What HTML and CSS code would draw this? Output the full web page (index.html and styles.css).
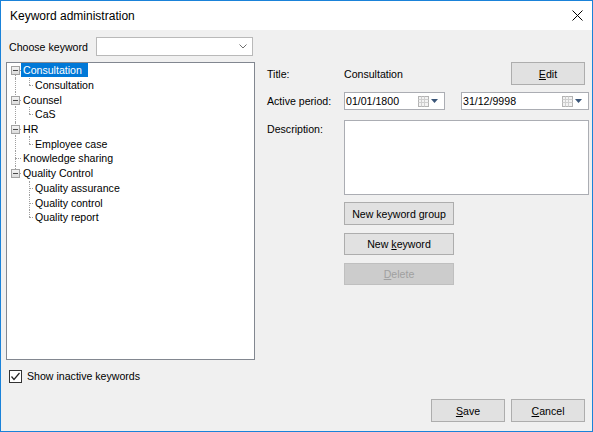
FILE: index.html
```html
<!DOCTYPE html>
<html>
<head>
<meta charset="utf-8">
<title>Keyword administration</title>
<link rel="stylesheet" href="styles.css">
</head>
<body>
<div class="window">
  <div class="titlebar">
    <span class="title">Keyword administration</span>
    <svg class="close" width="11" height="11" viewBox="0 0 11 11"><path d="M0.5 0.5 L10.5 10.5 M10.5 0.5 L0.5 10.5" stroke="#000" stroke-width="1" fill="none"/></svg>
  </div>
  <div class="content">
    <div class="main">
      <div class="left">
        <div class="choose">
          <span class="choose-label">Choose keyword</span>
          <div class="combo">
            <svg class="chev" width="8" height="5" viewBox="0 0 8 5"><path d="M0.5 0.5 L4 4 L7.5 0.5" stroke="#6f6f6f" fill="none" stroke-width="1"/></svg>
          </div>
        </div>
        <div class="tree">
          <div class="row"><span class="c vb h"><span class="box"></span></span><span class="lbl sel">Consultation</span></div>
          <div class="row"><span class="c vf"></span><span class="c c2 vt h"></span><span class="lbl">Consultation</span></div>
          <div class="row"><span class="c vf h"><span class="box"></span></span><span class="lbl">Counsel</span></div>
          <div class="row"><span class="c vf"></span><span class="c c2 vt h"></span><span class="lbl">CaS</span></div>
          <div class="row"><span class="c vf h"><span class="box"></span></span><span class="lbl">HR</span></div>
          <div class="row"><span class="c vf"></span><span class="c c2 vt h"></span><span class="lbl">Employee case</span></div>
          <div class="row"><span class="c vf h"></span><span class="lbl">Knowledge sharing</span></div>
          <div class="row"><span class="c vt h"><span class="box"></span></span><span class="lbl">Quality Control</span></div>
          <div class="row"><span class="c"></span><span class="c c2 vf h"></span><span class="lbl">Quality assurance</span></div>
          <div class="row"><span class="c"></span><span class="c c2 vf h"></span><span class="lbl">Quality control</span></div>
          <div class="row"><span class="c"></span><span class="c c2 vt h"></span><span class="lbl">Quality report</span></div>
        </div>
        <div class="check-row">
          <span class="checkbox">
            <svg width="11" height="11" viewBox="0 0 11 11"><path d="M1.5 5.5 L4 8.5 L9.5 2" stroke="#222" stroke-width="1.2" fill="none"/></svg>
          </span>
          <span class="check-label">Show inactive keywords</span>
        </div>
      </div>
      <div class="right">
        <div class="title-row">
          <span class="label">Title:</span>
          <span class="value">Consultation</span>
          <button class="btn edit"><u>E</u>dit</button>
        </div>
        <div class="period-row">
          <span class="label">Active period:</span>
          <div class="date d1">
            <span class="date-text">01/01/1800</span>
            <span class="cal">
              <svg width="11" height="11" viewBox="0 0 11 11"><rect x="0.5" y="0.5" width="10" height="10" fill="#f3f3f3" stroke="#b3b3b3"/><path d="M0.5 3.5 H10.5 M0.5 6.5 H10.5 M3.5 0.5 V10.5 M6.5 0.5 V10.5" stroke="#cfcfcf"/></svg>
              <svg class="tri" width="7" height="4" viewBox="0 0 7 4"><path d="M0 0 H7 L3.5 4 Z" fill="#3a5578"/></svg>
            </span>
          </div>
          <div class="date d2">
            <span class="date-text">31/12/9998</span>
            <span class="cal">
              <svg width="11" height="11" viewBox="0 0 11 11"><rect x="0.5" y="0.5" width="10" height="10" fill="#f3f3f3" stroke="#b3b3b3"/><path d="M0.5 3.5 H10.5 M0.5 6.5 H10.5 M3.5 0.5 V10.5 M6.5 0.5 V10.5" stroke="#cfcfcf"/></svg>
              <svg class="tri" width="7" height="4" viewBox="0 0 7 4"><path d="M0 0 H7 L3.5 4 Z" fill="#3a5578"/></svg>
            </span>
          </div>
        </div>
        <div class="desc-row">
          <span class="label desc-label">Description:</span>
          <div class="textarea"></div>
        </div>
        <div class="actions">
          <button class="btn act nkg">New keyword group</button>
          <button class="btn act nk">New <u>k</u>eyword</button>
          <button class="btn act del" disabled><u>D</u>elete</button>
        </div>
      </div>
    </div>
    <div class="footer">
      <button class="btn foot"><u>S</u>ave</button>
      <button class="btn foot"><u>C</u>ancel</button>
    </div>
  </div>
</div>
</body>
</html>
```

FILE: styles.css
```css
* { box-sizing: border-box; }
html, body { margin: 0; padding: 0; background: #ffffff; }
body {
  font-family: "Liberation Sans", Arial, sans-serif;
  font-size: 10.6px;
  color: #000;
}
.window {
  width: 593px;
  height: 432px;
  border: 1px solid #1a82d9;
  display: flex;
  flex-direction: column;
  overflow: hidden;
}
.titlebar {
  height: 29px;
  flex: none;
  background: #fff;
  display: flex;
  align-items: center;
  justify-content: space-between;
  padding: 0 9px 0 9px;
}
.title { font-size: 12px; }
.close { display: block; margin-top: 0; }

.content {
  flex: 1;
  background: #f0f0f0;
  display: flex;
  flex-direction: column;
  padding: 0 3px 0 5px;
}
.main {
  display: grid;
  grid-template-columns: 249px 322px;
  column-gap: 12px;
}
.left { display: flex; flex-direction: column; }
.choose {
  margin-top: 7px;
  height: 19px;
  display: flex;
  align-items: center;
  padding-left: 3px;
}
.choose-label { width: 87px; flex: none; }
.combo {
  width: 157px;
  height: 19px;
  background: #fff;
  border: 1px solid #b9b9b9;
  display: flex;
  align-items: center;
  justify-content: flex-end;
  padding-right: 5px;
}
.chev { display: block; }

.tree {
  margin-top: 6px;
  height: 298px;
  background: #fff;
  border: 1px solid #828790;
  padding-top: 0;
}
.row {
  height: 14.7px;
  display: flex;
  align-items: center;
}
.c {
  position: relative;
  flex: none;
  width: 14px;
  align-self: stretch;
}
.c2 { width: 12px; }
.c::before {
  content: "";
  position: absolute;
  left: 8px;
  border-left: 1px dotted #a0a0a0;
  display: none;
}
.vf::before { display: block; top: 0; bottom: 0; }
.vt::before { display: block; top: 0; height: 50%; }
.vb::before { display: block; top: 50%; bottom: 0; }
.h::after {
  content: "";
  position: absolute;
  left: 8px;
  right: 0;
  top: 50%;
  border-top: 1px dotted #a0a0a0;
}
.box {
  position: absolute;
  z-index: 1;
  left: 4px;
  top: 50%;
  margin-top: -4px;
  width: 9px;
  height: 9px;
  border: 1px solid #a2a2a2;
  background: linear-gradient(#f4f4f4, #dcdcdc);
}
.box::after {
  content: "";
  position: absolute;
  left: 1px;
  right: 1px;
  top: 3px;
  border-top: 1px solid #4a4a4a;
}
.lbl {
  padding: 0 6px 0 2px;
  height: 14px;
  line-height: 14px;
  white-space: nowrap;
}
.lbl.sel { background: #0078d7; color: #fff; }

.check-row {
  margin-top: 9px;
  display: flex;
  align-items: center;
  padding-left: 3px;
  height: 14px;
}
.checkbox {
  width: 13px;
  height: 13px;
  border: 1px solid #333;
  background: #fff;
  display: flex;
  align-items: center;
  justify-content: center;
}
.checkbox svg { display: block; }
.check-label { margin-left: 5px; }

.right { display: flex; flex-direction: column; }
.label { width: 77px; flex: none; }
.title-row {
  margin-top: 32px;
  height: 23px;
  display: flex;
  align-items: center;
}
.value { flex: 1; }
.btn {
  font-family: inherit;
  font-size: 10.6px;
  color: #000;
  background: #e1e1e1;
  border: 1px solid #adadad;
  padding: 0;
  margin: 0;
  text-align: center;
}
.btn u { text-decoration-thickness: 1px; text-underline-offset: 1px; }
.edit { width: 74px; height: 23px; margin-right: 4px; }

.period-row {
  margin-top: 7px;
  height: 18px;
  display: flex;
  align-items: center;
}
.date {
  height: 18px;
  background: #fff;
  border: 1px solid #abadb3;
  display: flex;
  align-items: center;
  justify-content: space-between;
  padding: 0 6px 0 1px;
}
.d1 { width: 101px; }
.d2 { width: 128px; margin-left: 16px; }
.cal { display: flex; align-items: center; gap: 2px; }
.cal svg { display: block; }

.desc-row {
  margin-top: 10px;
  display: flex;
  align-items: flex-start;
}
.desc-label { padding-top: 3px; }
.textarea {
  width: 245px;
  height: 75px;
  background: #fff;
  border: 1px solid #abadb3;
}
.actions {
  display: flex;
  flex-direction: column;
  align-items: flex-start;
  padding-left: 77px;
}
.act { width: 110px; height: 22px; margin-top: 8px; }
.nkg { height: 23px; margin-top: 7px; }
.del { background: #cccccc; border-color: #bfbfbf; color: #a0a0a0; }

.footer {
  margin-top: auto;
  display: flex;
  justify-content: flex-end;
  gap: 6px;
  padding: 0 4px 9px 0;
}
.foot { width: 74px; height: 23px; }
```
